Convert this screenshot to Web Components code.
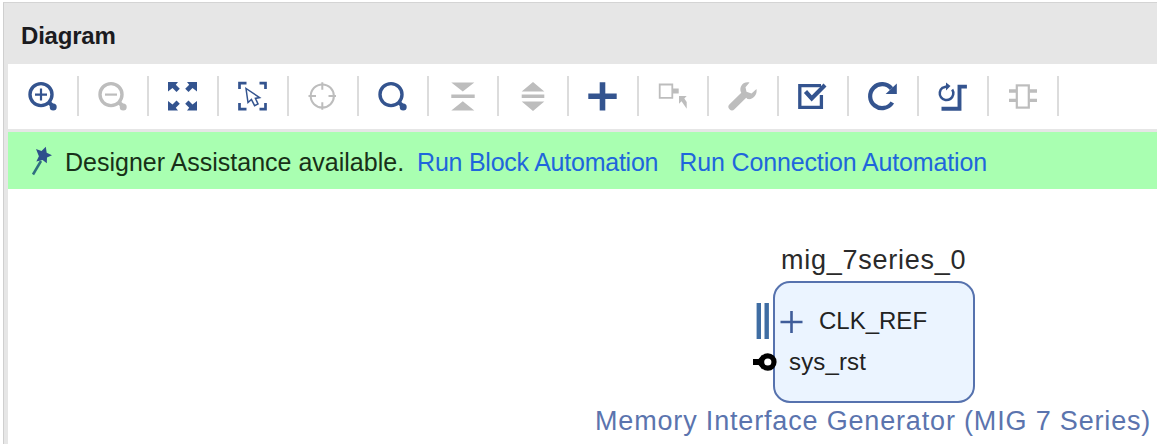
<!DOCTYPE html>
<html lang="en">
<head>
<meta charset="utf-8">
<title>Diagram</title>
<style>
html,body{margin:0;height:100%;background:#fff;overflow:hidden}
body{font-family:"Liberation Sans",Arial,sans-serif;color:#1c1c1c}
</style>
</head>
<body>
<diagram-panel>
  <panel-title slot="title">Diagram</panel-title>
  <tool-bar slot="tools">
    <tool-button icon="zoomin"></tool-button>
    <tool-button icon="zoomout" disabled></tool-button>
    <tool-button icon="fit"></tool-button>
    <tool-button icon="select"></tool-button>
    <tool-button icon="target" disabled></tool-button>
    <tool-button icon="search"></tool-button>
    <tool-button icon="collapse" disabled></tool-button>
    <tool-button icon="expand" disabled></tool-button>
    <tool-button icon="add"></tool-button>
    <tool-button icon="external" disabled></tool-button>
    <tool-button icon="wrench" disabled></tool-button>
    <tool-button icon="validate"></tool-button>
    <tool-button icon="refresh"></tool-button>
    <tool-button icon="route"></tool-button>
    <tool-button icon="chip" disabled></tool-button>
  </tool-bar>
  <assist-bar slot="assist">Designer Assistance available.
    <a slot="block">Run Block Automation</a>
    <a slot="connection">Run Connection Automation</a>
  </assist-bar>
  <ip-block>
    <span slot="name">mig_7series_0</span>
    <span slot="bus">CLK_REF</span>
    <span slot="pin">sys_rst</span>
    <span slot="kind">Memory Interface Generator (MIG 7 Series)</span>
  </ip-block>
</diagram-panel>
<script>
const define = (name, html) => customElements.define(name, class extends HTMLElement {
  constructor() {
    super();
    this.attachShadow({ mode: 'open' }).innerHTML = html;
  }
});

define('diagram-panel', `<style>
:host{display:flex;flex-direction:column;box-sizing:border-box;height:444px;margin-left:3px;margin-right:3px;padding-top:2px}
.frame{flex:1;display:flex;flex-direction:column;background:#e6e6e6;border-left:1px solid #cfcfcf;border-top:1px solid #d4d4d4;padding-left:4px}
.canvas{flex:1;background:#fff;position:relative;margin-right:-3px}
::slotted(assist-bar){margin-top:3px}
</style><div class="frame"><slot name="title"></slot><slot name="tools"></slot><slot name="assist"></slot><div class="canvas"><slot></slot></div></div>`);

define('panel-title', `<style>
:host{display:flex;align-items:center;height:61px;padding:4px 0 0 13px;box-sizing:border-box;font-weight:bold;font-size:24px;letter-spacing:-.2px;color:#1b1b1f}
</style><slot></slot>`);

define('tool-bar', `<style>
:host{display:flex;align-items:center;height:65px;background:#fff;padding-left:1px;box-sizing:border-box;padding-bottom:1px}
</style><slot></slot>`);

define('assist-bar', `<style>
:host{display:flex;align-items:center;height:57px;box-sizing:border-box;padding-top:3px;background:#a9ffb1;font-size:25px;white-space:nowrap;padding-left:22px;color:#183018}
svg{width:24px;height:32px;margin-right:11px;flex:none}
::slotted(a){color:#1f66dc}
::slotted([slot=block]){letter-spacing:-.24px;margin-left:13px}
::slotted([slot=connection]){letter-spacing:-.14px;margin-left:21px}
</style><svg viewBox="0 0 24 32"><path d="M3 28.500L11 15" stroke="#2f6f80" stroke-width="2.500" fill="none"/><path d="M6 3l5.500 2L15.800.800l.9 6 5.300 2.500-5 2.300-.2 5.700-4.200-3.300-6.300 1.500 2.600-5.300z" fill="#2f4f8c"/></svg><span><slot></slot></span><slot name="block"></slot><slot name="connection"></slot>`);

const lens = '<circle cx="14" cy="14.600" r="11" stroke-width="3.400"/><path d="M22 22.500L27 27.200" stroke-width="4"/><circle cx="26.200" cy="27" r="3.500" fill="currentColor" stroke="none"/>';
const icons = {
  zoomin: lens + '<path d="M8 14.600h12M14 8.600v12" stroke-width="2.200"/>',
  zoomout: lens + '<path d="M8 14.600h12" stroke-width="2.200"/>',
  search: lens,
  fit: '<g fill="currentColor" stroke="none"><path d="M1 2h10l-2.200 2.800 4 4-3.300 3.300-4-4L1 11.500z"/><path d="M30 2H20l2.200 2.800-4 4 3.300 3.300 4-4 4.500 3.400z"/><path d="M1 30.500h10l-2.200-2.800 4-4-3.300-3.300-4 4L1 21z"/><path d="M30 30.500H20l2.200-2.800-4-4 3.300-3.300 4 4 4.500-3.400z"/></g>',
  select: '<path d="M2.500 9V3.200h7M22.500 3.200h6V9M2.500 23v6.200h7M22.500 29.200h6V23" stroke-width="2.700"/><path d="M9 8.500l2 14 3.400-3 3.200 6.200 3.400-1.700-2.600-5.600 4.200-.8z" stroke-width="1.500"/>',
  target: '<circle cx="15.300" cy="16" r="11.600" stroke-width="2"/><path d="M15.300 2.200v7.500M15.300 22.300v7.500M1.500 16h7.500M21.500 16h7.500" stroke-width="2"/>',
  collapse: '<path d="M4.300 2.500h23L15.800 11.500zM4.300 30.500h23L15.800 21.300zM4.300 14.600h23.400v3.400H4.300z" fill="currentColor" stroke="none"/>',
  expand: '<path d="M4.700 11.500h22.600L16 2zM4.700 21.400h22.600L16 31zM4.700 14.600h22.600v3.500H4.700z" fill="currentColor" stroke="none"/>',
  add: '<path d="M1.300 16.300h28.400M15.500 2.200v28.400" stroke-width="5.600"/>',
  external: '<path d="M2.700 4.500h12.600v13.300H2.700z" stroke-width="1.800"/><path d="M16 8.500h5.700v5H16zM22 16h7.700l-2.400 2.400 2.400 3.600v6.700L24.500 21.200 22 23.700z" fill="currentColor" stroke="none"/>',
  wrench: '<path d="M5 26.800L17 15" stroke-width="7" stroke-linecap="round"/><path d="M22.500 2.500c-6-1.500-11 4-8.500 10l6.500 6.500c5.500 1 10-4 9-10l-5 4.500-5-1.800-1-4.400z" fill="currentColor" stroke="none"/>',
  validate: '<path d="M24 5.700H2.800v21.600h21.600V15" stroke-width="3.300"/><path d="M8.500 11.500l6.200 7L28 5" stroke-width="4.200"/>',
  refresh: '<path d="M25.300 22.500A12 12 0 1 1 24.500 8.600" stroke-width="4.200"/><path d="M29.800 3.500V14H18.600z" fill="currentColor" stroke="none"/>',
  route: '<path d="M15.200 9.500A6.800 6.800 0 1 1 5.500 7.800L11 6" stroke-width="2.500"/><path d="M9 2.500l4.500 3.500-4.500 4.500z" fill="currentColor" stroke="none"/><path d="M4.500 28.700h18V6.600h7.400" stroke-width="3.900"/>',
  chip: '<rect x="9.800" y="5.400" width="12" height="22.200" stroke-width="2.200"/><path d="M2 11h7M2 20.300h7M22.500 11H30M22.500 20.300H30" stroke-width="3.300"/>'
};
customElements.define('tool-button', class extends HTMLElement {
  connectedCallback() {
    this.attachShadow({ mode: 'open' }).innerHTML = `<style>
:host{display:flex;box-sizing:border-box;width:70px;height:40px;align-items:center;justify-content:center;border-right:2px solid #dcdcdc;color:#34548f;flex:none}
:host([disabled]){color:#bdbdbd}
svg{width:32px;height:32px;fill:none;stroke:currentColor}
</style><svg viewBox="0 0 32 32">${icons[this.getAttribute('icon')]}</svg>`;
  }
});

define('ip-block', `<style>
:host{position:absolute;left:587px;top:55px;width:558px;height:200px;white-space:nowrap}
.name{position:absolute;left:186px;top:0;font-size:27px;line-height:32px;letter-spacing:.75px;color:#2a2a2a}
.box{position:absolute;left:178px;top:37px;width:202px;height:122px;box-sizing:border-box;border:2px solid #5672ae;border-radius:17px;background:#ebf4ff}
.bus,.pin{position:absolute;line-height:28px;color:#222}
.bus{left:224px;top:63px;font-size:24px}
.pin{left:194px;top:104px;font-size:24px;letter-spacing:.15px}
.kind{position:absolute;left:0;top:161px;font-size:27px;line-height:32px;letter-spacing:.83px;color:#5b74ae}
svg{position:absolute;left:158px;top:57px}
</style><div class="name"><slot name="name"></slot></div><div class="box"></div>
<svg width="60" height="75" viewBox="0 0 60 75"><path d="M5.800 2v36M13.700 2v36" stroke="#3f6da3" stroke-width="4.400"/><path d="M27.500 21h22M38.500 10v22" stroke="#3f5c99" stroke-width="2.600"/><path d="M0 61h10" stroke="#000" stroke-width="6"/><path d="M3 61l6-7v14z"/><circle cx="14.800" cy="61" r="6.200" fill="#fff" stroke="#000" stroke-width="5.200"/></svg>
<div class="bus"><slot name="bus"></slot></div><div class="pin"><slot name="pin"></slot></div><div class="kind"><slot name="kind"></slot></div>`);
</script>
</body>
</html>
